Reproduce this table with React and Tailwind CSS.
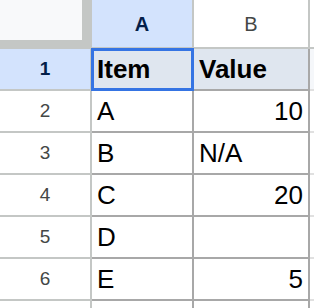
import React from 'react';

const rows = [
  { n: 1, a: 'Item', b: 'Value', head: true },
  { n: 2, a: 'A', b: '10', num: true },
  { n: 3, a: 'B', b: 'N/A' },
  { n: 4, a: 'C', b: '20', num: true },
  { n: 5, a: 'D', b: '' },
  { n: 6, a: 'E', b: '5', num: true },
  { n: '', a: '', b: '' },
];

export default function App() {
  return (
    <div className="w-[314px] h-[308px] overflow-hidden bg-white font-['Liberation_Sans',Arial,sans-serif]">
      <div className="grid grid-cols-[92px_102px_116px_40px] grid-rows-[49px_repeat(7,42px)]">
        {/* Column header row */}
        <div className="bg-[#f8f9fa] border-r-[10px] border-b-[9px] border-[#c4c7c5]"></div>
        <div className="flex items-center justify-center bg-[#d3e3fd] border-r-2 border-b-2 border-[#c4c7c5] text-[20px] font-bold text-[#041e49] pt-px">
          A
        </div>
        <div className="flex items-center justify-center bg-white border-r-2 border-b-2 border-[#c4c7c5] text-[20px] text-[#444746] pt-px">
          B
        </div>
        <div className="bg-white border-b-2 border-[#c4c7c5]"></div>

        {rows.map((r, i) => (
          <React.Fragment key={i}>
            <div
              className={`flex items-center justify-center border-r-2 border-b-2 border-[#c4c7c5] text-[19px] ${
                r.head ? 'bg-[#d3e3fd] font-bold text-[#041e49]' : 'bg-white text-[#444746]'
              }`}
            >
              {r.n}
            </div>
            <div
              className={`relative flex items-center px-[5px] border-r-2 border-b-2 border-[#a8a8a8] text-[26px] text-black ${
                r.head ? 'bg-[#dfe6ef] font-bold' : 'bg-white'
              }`}
            >
              {r.a}
              {r.head && (
                <div className="absolute -top-px -left-px -right-[2px] -bottom-[2px] border-[3px] border-[#3574e3]"></div>
              )}
            </div>
            <div
              className={`flex items-center px-[5px] border-r-2 border-b-2 border-[#a8a8a8] text-[26px] text-black ${
                r.num ? 'justify-end' : ''
              } ${r.head ? 'bg-[#dfe6ef] font-bold' : 'bg-white'}`}
            >
              {r.b}
            </div>
            <div className={`border-b-2 border-[#e0e0e0] ${r.head ? 'bg-[#f5f7fa]' : 'bg-white'}`}></div>
          </React.Fragment>
        ))}
      </div>
    </div>
  );
}
